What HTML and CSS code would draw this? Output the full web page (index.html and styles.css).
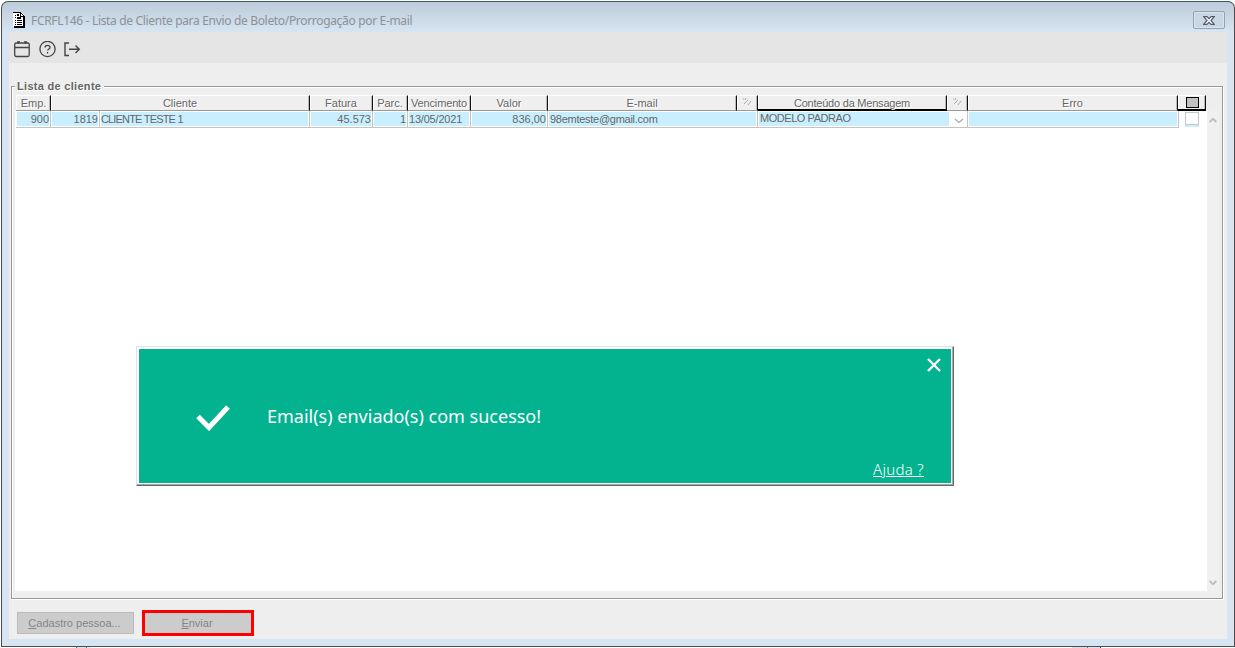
FILE: index.html
```html
<!DOCTYPE html>
<html lang="pt-BR">
<head>
<meta charset="utf-8">
<title>FCRFL146 - Lista de Cliente</title>
<link rel="stylesheet" href="styles.css">
</head>
<body>
<div class="window">
  <header class="titlebar">
    <svg class="app-icon" width="13" height="17" viewBox="0 0 13 17" shape-rendering="crispEdges"><path d="M0 0H8L11 3V15H0Z" fill="#fff"/><path d="M0 0h8v1H0zM8 1h1v1H8zM9 2h1v1H9zM10 3h1v1h-1zM7 1h1v3h3v1H7zM10 4h2v12H1v-2h9zM2 3h1v1H2zM4 2h2v2H4zM2 5h1v1H2zM4 5h4v2H4zM2 8h1v1H2zM4 8h5v1H4zM2 10h1v1H2zM4 10h5v1H4zM2 12h1v1H2zM4 12h5v1H4z" fill="#000"/></svg>
    <h1 class="title">FCRFL146 - Lista de Cliente para Envio de Boleto/Prorrogação por E-mail</h1>
    <button class="close" aria-label="Fechar"><svg width="12" height="9" viewBox="0 0 12 9"><path d="M.7.7H4L6 2.700 8 .7h3.300L8 4.500 11.300 8.300H8L6 6.300 4 8.300H.7L4 4.500Z" fill="#f3f6fa" stroke="#555b6b" stroke-width="1.200"/></svg></button>
  </header>
  <main class="client">
    <nav class="toolbar">
      <svg width="16" height="17" viewBox="0 0 16 17" fill="none" stroke="#444" stroke-width="1.300"><rect x=".7" y="2" width="14.500" height="13.500" rx="1.500"/><path d="M.7 6.500h14.500M3 1h3M10 1h3M4.500 1v2M11.500 1v2"/></svg>
      <svg width="17" height="17" viewBox="0 0 17 17" fill="none" stroke="#444" stroke-width="1.300"><circle cx="8.500" cy="8" r="7.600"/><path d="M6 6.500C6 3.500 11 3.600 11 6.400c0 1.700-2.500 1.800-2.500 3.200M8.500 11v1.600"/></svg>
      <svg width="17" height="15" viewBox="0 0 17 15" fill="none" stroke="#444" stroke-width="1.400"><path d="M5 1H1v12.500h4M5 7.200h10M11.500 3.500l3.800 3.700-3.800 3.800"/></svg>
    </nav>
    <section class="group">
      <h2 class="legend">Lista de cliente</h2>
      <div class="grid">
        <div class="table">
          <div class="head">
            <span class="th emp">Emp.</span><span class="th">Cliente</span><span class="th">Fatura</span><span class="th">Parc.</span><span class="th venc">Vencimento</span><span class="th">Valor</span><span class="th">E-mail</span>
            <span class="th"><svg width="10" height="9" viewBox="0 0 10 9"><path d="M1 1h1M3 2l1-2M2 6l4-4M6 7l3-4" stroke="#aaa" fill="none"/></svg></span>
            <span class="th strong conteudo">Conteúdo da Mensagem</span>
            <span class="th"><svg width="10" height="9" viewBox="0 0 10 9"><path d="M1 1h1M3 2l1-2M2 6l4-4M6 7l3-4" stroke="#aaa" fill="none"/></svg></span>
            <span class="th">Erro</span><span class="th strong"><i class="square"></i></span>
          </div>
          <div class="row">
            <span class="td num">900</span><span class="td num">1819</span><span class="td name">CLIENTE TESTE 1</span><span class="td num fat">45.573</span><span class="td num">1</span><span class="td date">13/05/2021</span><span class="td num val">836,00</span><span class="td mail">98emteste@gmail.com</span>
            <span class="td model"><span class="model-text">MODELO PADRAO</span><span class="drop"><svg width="10" height="6" viewBox="0 0 10 6"><path d="M1 1l4 3.500L9 1" fill="none" stroke="#aaa" stroke-width="1.200"/></svg></span></span>
            <span class="td"></span><span class="check-cell"><i class="check"></i></span>
          </div>
        </div>
        <div class="scroll">
          <svg width="8" height="6" viewBox="0 0 8 6"><path d="M.7 5L4 1.700 7.300 5" fill="none" stroke="#bbb" stroke-width="1.800"/></svg>
          <svg width="8" height="6" viewBox="0 0 8 6"><path d="M.7 1L4 4.300 7.300 1" fill="none" stroke="#bbb" stroke-width="1.800"/></svg>
        </div>
      </div>
    </section>
    <footer class="actions">
      <button class="btn register"><span><u>C</u>adastro pessoa...</span></button>
      <button class="btn send"><span><u>E</u>nviar</span></button>
    </footer>
  </main>
</div>
<div class="behind"><i class="tab tab-left"></i><i class="tab tab-right"></i></div>
<div class="toast" role="alert">
  <div class="toast-body">
    <svg class="tick" width="34" height="26" viewBox="0 0 34 26"><path d="M2 11.500L13 22.500 32 2" fill="none" stroke="#fff" stroke-width="5"/></svg>
    <p class="message">Email(s) enviado(s) com sucesso!</p>
    <div class="side">
      <svg width="14" height="14" viewBox="0 0 14 14"><path d="M1 1l12 12M13 1L1 13" stroke="#fff" stroke-width="2.400"/></svg>
      <a class="help">Ajuda ?</a>
    </div>
  </div>
</div>
</body>
</html>
```
FILE: styles.css
```css
* { box-sizing: border-box; }
body { margin: 0; padding: 1px 0 0 1px; width: 1235px; height: 648px; overflow: hidden; background: #fff; font: 11px/14px "Liberation Sans", Arial, sans-serif; color: #666; }
button { font: inherit; color: inherit; padding: 0; }
svg { display: block; flex: none; }
.window { width: 1234px; height: 646px; border: 1px solid #4b4d50; border-top-color: #3f5652; border-radius: 7px 7px 0 0; padding: 0 7px 7px; background: linear-gradient(#bdcbda 0, #d7e4f1 30px); }
.titlebar { height: 30px; display: flex; align-items: center; padding: 6px 2px 0 4px; }
.app-icon { margin: 1px 5px 0 0; }
.title { margin: 2px 0 0; font: 12px/16px "Noto Sans", sans-serif; color: #8d9196; white-space: nowrap; letter-spacing: -.325px; }
.close { margin-left: auto; width: 32px; height: 18px; border: 1px solid #93a1b1; border-radius: 2px; background: #c9d6e4; box-shadow: inset 0 0 0 1px #d9e4ef; display: flex; align-items: center; justify-content: center; }
.client { height: 607px; background: #eee; display: flex; flex-direction: column; }
.toolbar { height: 31px; background: #e5e5e5; display: flex; align-items: center; gap: 8.500px; padding: 3px 0 0 5px; }
.group { margin: 23px 4px 0 2px; height: 513px; border: 1px solid #999; box-shadow: 1px 1px #fff, inset 1px 1px #fff; padding: 0 3px 7px; }
.legend { margin: -8px 0 0; padding: 0 3px 0 2px; width: max-content; height: 16px; background: #eee; font-size: 11px; line-height: 14px; letter-spacing: .3px; color: #666; text-shadow: 1px 1px #fff; }
.grid { height: 496px; display: flex; background: linear-gradient(#eee 16px, #fff 16px); }
.table { width: 1193px; padding-left: 1px; }
.head { display: grid; grid-template-columns: 35px 259px 63px 35px 63px 77px 189px 21px 189px 21px 210px 28px; height: 16px; }
.th { display: flex; align-items: center; justify-content: center; border-top: 1px solid #fff; border-bottom: 1px solid #999; border-right: 1px solid #111; box-shadow: inset 1px 0 #fff, inset -1px 0 #bbb; background: #efefef; text-shadow: 1px 1px #fff; white-space: nowrap; padding-bottom: 1px; line-height: 12px; }
.emp { padding-left: 1px; }
.venc { letter-spacing: -.15px; }
.conteudo { letter-spacing: -.22px; }
.strong { border-bottom: 2px solid #000; padding: 0; }
.square { width: 13px; height: 11px; margin-left: 1px; border: 1px solid #000; background: #c0c0c0; }
.row { display: grid; grid-template-columns: 35px 49px 210px 63px 35px 63px 77px 210px 210px 211px 27px; height: 17px; width: 1190px; }
.td { display: flex; align-items: center; background: #c9efff; border: solid #c4c4c4; border-width: 0 1px 1px 0; box-shadow: inset 1px 1px #fff, inset -1px -1px #fff; padding: 0 1px 1px 2px; white-space: nowrap; line-height: 14px; }
.num { justify-content: flex-end; }
.name { letter-spacing: -.85px; word-spacing: .3px; padding-left: 1px; }
.date { letter-spacing: -.2px; padding-left: 1px; }
.mail { letter-spacing: -.27px; }
.model { padding: 1px 0 0 2px; }
.model-text { flex: 1; margin-top: -4px; letter-spacing: -.45px; }
.drop { width: 18px; height: 15px; background: #fff; display: flex; align-items: center; justify-content: center; padding: 3px 0 0 1px; }
.check-cell { padding: 1px 0 0 6px; }
.check { display: block; width: 14px; height: 15px; border: 1px solid #c8c8c8; border-bottom: 2px solid #c9efff; background: #fff; box-shadow: inset 0 -1px #c8c8c8; }
.scroll { width: 12px; margin-top: 16px; background: #f0f0f0; display: flex; flex-direction: column; align-items: center; justify-content: space-between; padding: 6px 1px 5px 0; }
.actions { display: flex; align-items: center; gap: 8px; padding: 11px 0 0 8px; }
.btn { height: 22px; width: 117px; border: 1px solid #bbb; background: #ccc; color: #858585; }
.register span { margin-right: 2px; }
.btn.send { width: 112px; height: 26px; border: 3px solid #f00; }
.send span { margin-right: 2px; }
.behind { display: flex; justify-content: space-between; padding: 0 134px 0 75px; height: 1px; }
.tab { width: 15px; height: 1px; background: linear-gradient(90deg, #666 1px, #d7e4f1 1px 10px, #777 10px 11px, #eee 11px); }
.tab-right { width: 29px; background: linear-gradient(90deg, #ddd 15px, #777 15px 16px, #d7e4f1 16px 28px, #444 28px); }
.toast { position: absolute; left: 136px; top: 346px; width: 818px; height: 140px; border: 1px solid #e2e2e2; border-right-color: #666; border-bottom-color: #666; box-shadow: inset -1px -1px #aaa; padding: 2px; background: #fff; }
.toast-body { height: 134px; width: 812px; background: #03b28f; display: flex; align-items: center; color: #fff; padding-left: 57px; }
.tick { margin-top: 3px; }
.message { margin: 0 0 0 37px; font: 18px/24px "Noto Sans", sans-serif; white-space: nowrap; }
.side { margin-left: auto; align-self: stretch; width: 90px; display: flex; flex-direction: column; justify-content: space-between; align-items: flex-end; padding: 9px 10px 4px 0; }
.help { font: 300 15px/20px "Noto Sans", sans-serif; letter-spacing: .3px; text-decoration: underline; margin-right: 17px; }
```
